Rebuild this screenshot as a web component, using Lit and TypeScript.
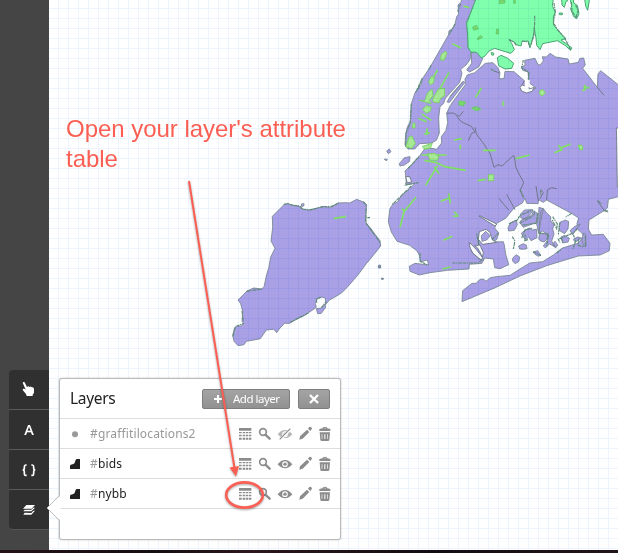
import { LitElement, html, svg, css } from "lit";
import { customElement, property } from "lit/decorators.js";

const icons: Record<string, unknown> = {
  table: svg`<path d="M12 12h37v8H12z M12 24h8v4h-8z M23 24h7v4h-7z M32 24h8v4h-8z M42 24h7v4h-7z M12 32h8v5h-8z M23 32h7v5h-7z M32 32h8v5h-8z M42 32h7v5h-7z M12 41h8v6h-8z M23 41h7v6h-7z M32 41h8v6h-8z M42 41h7v6h-7z"/>`,
  search: svg`<circle cx="24" cy="24" r="10" fill="none" stroke="currentColor" stroke-width="5"/><path d="M31 32L44 44" stroke="currentColor" stroke-width="7" stroke-linecap="round"/>`,
  eye: svg`<path fill-rule="evenodd" d="M8 31Q18 18 30 18T52 31Q42 43 30 43T8 31Z M30 22a8.500 8.500 0 1 0 0 17a8.500 8.500 0 1 0 0-17Z"/><circle cx="30" cy="30.500" r="5"/>`,
  hidden: svg`<g opacity=".62"><path fill-rule="evenodd" d="M8 31Q18 18 30 18T52 31Q42 43 30 43T8 31Z M30 22a8.500 8.500 0 1 0 0 17a8.500 8.500 0 1 0 0-17Z"/><circle cx="30" cy="30.500" r="5"/></g><path d="M15 48L48 14" stroke="#fff" stroke-width="8"/><path d="M14 46L46 14" stroke="currentColor" stroke-width="3.500"/>`,
  pencil: svg`<path d="M13 47L15 37L36 17L43 24L23 44Z M39 14L43 9Q46 7 49 10T50 16L46 21Z"/>`,
  trash: svg`<path fill-rule="evenodd" d="M13 15Q20 13 22 13Q23 8 30 8T37 13Q40 13 46 15V21H13Z M26 13H34Q34 11 30 11T26 13Z"/><path fill-rule="evenodd" d="M14 25H45L43 48Q42 51 39 51H20Q17 51 16 48Z M20 31V44H22V31Z M28 31V45H31V31Z M37 31V44H39V31Z"/>`,
};

@customElement("tool-icon")
class ToolIcon extends LitElement {
  static styles = css`
    :host { display: block; width: 20px; height: 20px; color: #8c8c8c; }
    .icon { display: block; width: 20px; height: 20px; fill: currentColor; }
  `;
  @property() name = "table";
  render() {
    return html`<svg class="icon" viewBox="0 0 60 60">${icons[this.name]}</svg>`;
  }
}

@customElement("layer-row")
class LayerRow extends LitElement {
  static styles = css`
    :host { display: block; }
    .row { display: flex; align-items: center; height: 29px; border-bottom: 1px solid #ddd; padding: 0 5px 0 10px; color: #222;
      font: 12px/29px "Noto Sans", sans-serif; letter-spacing: .14px; }
    .shape { width: 10px; height: 10px; margin-right: 10px; flex: none; }
    .name { flex: 1; }
    .hash, .dim { color: #999; }
    .tools { display: flex; }
  `;
  @property() name = "";
  @property({ type: Boolean }) off = false;
  render() {
    return html`<div class="row">
      <svg class="shape" viewBox="0 0 30 30">
        ${this.off
          ? svg`<circle cx="15" cy="16" r="9" fill="#999"/>`
          : svg`<path d="M0 31V20Q0 17 8 16Q14 15 15 9Q16 1 20 0H30V31Z" fill="#222"/>`}
      </svg>
      <span class="name ${this.off ? "dim" : ""}"><span class="hash">#</span>${this.name}</span>
      <span class="tools">
        ${["table", "search", this.off ? "hidden" : "eye", "pencil", "trash"].map(
          (n) => html`<tool-icon name=${n}></tool-icon>`
        )}
      </span>
    </div>`;
  }
}

@customElement("city-map")
class CityMap extends LitElement {
  static styles = css`
    :host { display: block; mix-blend-mode: multiply; }
    .map { display: block; width: 569px; height: 550px; }
    .land { fill: #aaa0e6; stroke: #75868f; stroke-width: 2.500; stroke-linejoin: round; }
    .north { fill: #80ffac; stroke: #4aa473; stroke-width: 3; }
    .rough { fill: none; stroke: #5f8c78; stroke-width: 3.500; stroke-dasharray: 9 2 4 3 12 2; }
    .creek { fill: none; stroke: #70788c; stroke-width: 3; stroke-linejoin: round; }
    .water { fill: #fff; stroke: #65727b; stroke-width: 2.500; }
    .line { fill: none; stroke: #81e462; stroke-width: 5; stroke-linejoin: round; }
    .patch { fill: #a7e994; stroke: #73d45a; stroke-width: 2.500; }
    .inner { fill: #7ed76f; stroke: #58c55f; stroke-width: 2; }
  `;
  render() {
    return html`<svg class="map" viewBox="147 0 1707 1650">
      <g transform="translate(1110 0)">
        <path class="land" d="M275 -4L273 7 264 15 266 42 260 50 255 72 250 84 237 93 236 104 180 202 157 236 154 252 135 278 124 311 122 363 112 381 107 403 105 435 114 447 134 447 149 431 185 429 199 421 208 399 206 354 210 320 221 310 226 295 269 247 276 220 272 208 288 195 300 179 303 155 294 142 293 104 289 66 299 45 318 0Z"/>
        <path class="rough" d="M272 12L263 35 M255 72L237 104 M183 196L176 210 M157 235L136 280 M124 311L120 372 108 400 107 440"/>
        <path class="rough" d="M153 243L145 267"/>
        <path class="land" d="M304 157L320 157 338 176 327 200 299 216 290 210 305 190Z M231 306L243 285 280 243 284 248 239 307Z M242 289L278 246"/>
        <path class="north" d="M318 -4L300 44 290 70 293 105 294 142 303 156 320 157 333 173 343 170 357 153 374 145 399 153 423 160 433 149 425 130 417 118 433 126 438 134 453 138 456 124 474 123 480 143 490 107 493 85 498 115 500 136 510 149 518 131 562 122 585 136 602 151 605 143 573 120 588 116 572 100 560 86 551 76 550 51 556 36 547 17 550 -4Z"/>
        <path class="rough" d="M494 47V68L492 104 484 133 M417 119L433 127 438 136 M456 123L475 126 480 142 M552 9L556 37 550 68 563 89 585 116 602 149"/>
        <path class="north" d="M382 173L393 166 412 174 431 190 425 205 405 207 386 197Z M364 157L372 160 370 166 364 164Z M575 -3L576 15 583 22 588 4 593 3 588 -3Z M600 -3L605 16 602 27 611 50 620 56 627 41 622 16 611 9 610 -3Z M644 -3L647 18 653 31 658 2 655 -3Z M568 39H577V44H568Z"/>
        <path class="rough" d="M604 6L606 32 618 53 624 32 617 16"/>
        <path class="land" d="M200 448L215 429 214 410 228 391 233 367 230 340 240 318 248 306 286 254 285 238 292 225 314 218 346 190 369 188 384 203 390 219 387 236 402 236 405 214 432 215 463 242 474 260 478 272 498 264 477 248 474 216 458 211 455 199 465 197 464 181 495 175 504 194 510 195 520 183 517 170 529 171 540 160 557 171 594 177 598 192 625 187 630 175 641 174 646 195 638 205 682 262 684 222 692 212 756 263 756 582 744 590 715 598 712 624 704 631 657 660 655 687 665 705 700 703 720 730 718 752 708 757 690 765 625 768 530 797 450 828 376 863 276 905 278 872 306 850 318 850 330 838 342 838 348 844 361 833 379 830 420 826 450 807 479 789 518 785 550 765 577 744 623 730 641 710 636 700 622 687 621 670 626 654 604 640 530 600 519 607 506 599 504 611 470 610 465 595 457 609 433 623 407 655 380 670 374 684 386 699 380 719 365 726 400 725 403 735 407 762 416 794 390 806 374 803 370 777 344 774 336 790 298 793 297 807 233 811 180 818 148 825 120 814 118 799 135 790 176 795 172 780 151 786 148 765 140 752 119 736 81 724 64 696 55 665 60 625 70 611 83 606 93 588 119 566 135 550 110 554 107 525 105 513 124 495 150 466 167 442Z"/>
        <path class="rough" d="M115 505L147 470 M145 548L106 555 112 530 M124 558L67 613 M150 760L151 784 172 795 M247 789H325L340 777 M301 730L307 757 330 778 M325 720L328 745 320 700 M346 690L362 709 M386 699L365 720 M460 180L455 204 477 216 472 267"/>
        <path class="creek" d="M229 340L249 339 268 349 280 334 M260 349L275 366 304 379 315 396 305 400 295 422 M315 382L319 402 338 427 360 460 372 502 384 494 396 498 431 466 435 480 437 500 445 518 461 547 456 560 450 570 460 593 M387 596L416 630 M410 583L435 629 M498 558L505 603 M513 570L520 578 510 596 M530 600L532 570 545 563 560 566 M682 602L703 632 714 636 M682 262L702 286 M374 213L388 219 M463 242L452 263 457 272"/>
        <path class="rough" d="M363 208L378 216 M450 569L461 592 M512 569V584 M701 632H714 M682 602L696 612"/>
        <path class="water" d="M450 262L457 255 470 260 474 248 478 267 493 262 486 274 470 279 455 273Z M327 648L332 648 380 672 375 678Z M297 728L303 732 320 750 338 773 333 780 309 760 301 745Z M314 737L330 735 340 758 337 772 330 756 322 743Z M107 530L119 530 125 545 112 549Z"/>
        <path fill="#fff" d="M464 262H479V240L465 238Z"/>
        <path class="water" d="M328 695L348 688 360 697 367 720 380 727 338 733 325 718Z"/>
        <path class="land" d="M334 707L347 694 361 707 350 720 336 724Z M50 453L58 447 63 455 55 461Z M43 477L52 478 49 483Z M88 491L103 473 120 470 119 484 103 495 90 498Z M25 797H32V804H25Z M35 835H40V838H35Z M-6 680L2 685 31 735 16 753 -12 789"/>

        <path class="land" d="M414 684L421 669 439 660 442 674 433 691 416 693Z M452 642L463 630 487 629 488 634 475 649 464 657 452 653Z M449 667L454 660 485 646 491 632 504 641 499 667 481 674 460 682Z M454 700L464 691 479 684 486 690 500 688 501 713 483 722 476 711 466 720Z M446 738L459 731 469 735 471 746 460 748 449 747Z M428 775L438 764 449 771 447 784 436 791 428 784Z M506 716L510 698 531 703 534 714 522 726 510 722Z M512 635L520 626 530 639 542 650 542 662 553 675 548 686 552 702 545 723 556 740 538 732 526 744 520 738 531 722 533 704 517 693 507 700 509 664Z M567 679L571 666 587 660 596 665 594 686 584 701 569 692Z M573 711L584 706 598 715 594 726 578 729Z M600 692L613 680 631 672 622 684 608 704Z M550 730L555 724 563 735 558 743 550 739Z M489 756L503 752 512 765 505 769 495 763Z M610 719L622 711 635 714 616 726Z M507 622L520 626 512 664 506 700 500 672 506 650Z M640 700L647 703 648 738 641 740 636 720Z"/>
        <path class="rough" d="M417 671L442 660 450 646 488 630 M449 670L492 646 494 637 M455 714L465 690 489 684 M466 703L464 722 474 719 M458 675L500 670 503 638 M506 700L536 702 530 740 M548 650L562 672 560 686 547 660 M570 667L565 703 M574 714L580 730 M625 716V736L639 741 M646 707L646 740 M610 704L617 722 609 747 M605 640L587 651 M622 687L609 699 565 718 570 728 M560 759L575 747 M427 710L435 723 430 747 M490 755L513 767"/>

        <path class="inner" d="M308 81L320 76 325 87 311 91Z M321 117L332 106 338 112 324 119Z M380 87H385V102H378Z M388 0H405V9L388 11Z M431 -2H436V10H431Z"/>
        <path class="line" d="M280 18L297 23 M247 131L273 144 M203 210L181 247 M237 217L210 266 M334 264L317 292 M268 304L274 317 M277 304L287 311 M305 325L332 329 M155 342L184 361 M145 355L170 365 M171 385V405 M162 402L179 398 M252 420L276 416 M271 434V448 M155 465H230 M163 481L200 488 225 500 287 511 M203 497L167 556 M193 500L207 521 M138 592L102 635 90 682 M102 632L96 626 M236 580L241 610 M212 604L236 595 M253 635L264 648 250 649 M220 721L247 709 M217 807L242 801 M323 542L347 538 M339 451H377 M437 476L479 465 M553 458L576 449 565 435 M570 445L602 432 M624 436L637 449 M400 304V318 M645 254V269L637 272 M640 263H658"/>
        <path class="patch" d="M210 180L214 163 226 154 231 158 223 180Z M176 246L183 230 193 231 191 248 181 255Z M164 302L173 278 186 267 189 287 178 302 184 311 148 301Z M187 299L205 267 224 265 224 287 213 294 206 309 191 306Z M158 328L168 317 184 321 181 334 168 340Z M129 369H135V384H127Z M116 412L126 408 136 431 125 445 108 441Z M157 439L187 430 181 445 164 448Z M355 524H371V542H355Z M171 462L194 460 207 470 202 481 180 480Z M626 435L636 436 639 449 629 449Z M508 273L518 269 526 278 517 288 509 283Z"/>
        <path class="inner" d="M267 306L272 301 278 307 287 306 280 318 266 314Z M307 323L321 320 332 327 317 333Z"/>
        <path class="water" d="M756 384H739L740 421 742 561H756Z"/>
      </g>
      <g transform="translate(660 540)">
        <path class="land" d="M191 75L203 70 216 76 238 78 244 87 269 91 309 79 331 83 354 69 378 68 389 69 410 58 433 67 440 74 436 125 480 182 482 198 464 221 439 251 413 286 386 317 367 337 350 348 327 361 317 374 316 354 306 351 292 356 286 371 289 382 266 398 253 407 237 414 222 422 209 430 194 430 180 444 170 458 161 448 139 450 121 476 107 479 79 484 72 494 54 497 42 484 38 466 43 446 50 438 62 438 72 430 66 425 68 394 62 371 54 360 81 333 101 324 125 327 132 320 140 283 146 265 152 231 165 205 153 183 158 142 157 109Z"/>
        <path class="land" d="M289 386L305 384 315 372 317 382 304 400 293 401Z M244 72L252 71 252 77 245 80Z M477 255H481V262H477Z M485 295H489V297H485Z"/>
        <path class="rough" d="M191 73L203 71 217 75 240 79 249 88 273 89 309 80 335 79 356 69 M430 65L440 80 M438 86V126 M442 113H450M438 130L480 187 M290 368L289 357 302 352 M304 383L318 365 M50 438L71 430 M66 393L70 425 M80 334L127 327 M210 427L265 399 M46 440L39 469"/>
        <path class="line" d="M341 116L378 109"/>
      </g>
    </svg>`;
  }
}

@customElement("app-root")
class AppRoot extends LitElement {
  static styles = css`
    :host { display: flex; flex-direction: column; width: 618px; height: 553px; overflow: hidden; background: #fff; }
    .main { display: flex; height: 550px; }
    .strip { height: 3px; background: linear-gradient(90deg, #241118, #140d12 25%, #2b171c 40%, #120c12 70%, #21141a); }
    .side { width: 49px; background: #454545; display: flex; flex-direction: column; align-items: flex-end; justify-content: flex-end; }
    .tools { width: 40px; margin-bottom: 20px; background: #303030; border-radius: 4px 0 0 4px; border-bottom: 1px solid #555; }
    .tool { height: 39px; border-bottom: 1px solid #5a5a5a; color: #fff; display: flex; align-items: center; justify-content: center; }
    .tool:last-child { border: 0; }
    .glyph { width: 40px; height: 40px; fill: #fff; flex: none; }
    .letter { font: 600 14.500px/39px "Open Sans", sans-serif; }
    .canvas { position: relative; width: 569px; height: 550px; background:
      linear-gradient(90deg, #edf4fd 1px, transparent 1px) 9px 0 / 10px 10px,
      linear-gradient(#edf4fd 1px, transparent 1px) 0 8px / 10px 10px, #fff; }
    .panel { position: absolute; left: 10px; top: 378px; width: 280px; height: 160px; background: #fff; border: 1px solid #bbb;
      border-radius: 3px; box-shadow: 0 0 2px rgba(0,0,0,.25); }
    .head { height: 39px; display: flex; align-items: center; padding: 0 10px; border-bottom: 1px solid #ddd; }
    .title { flex: 1; font: 15.500px/36px "Noto Sans", sans-serif; color: #222; letter-spacing: -.3px; padding-bottom: 2px; }
    .btn { box-sizing: border-box; height: 20px; border: 1px solid #7d7d7d; border-radius: 2px; background: linear-gradient(#a4a4a4, #919191);
      color: #fff; font: 11.500px/18px "Noto Sans", sans-serif; display: flex; align-items: center; white-space: nowrap; }
    .add { width: 88px; padding-left: 11px; gap: 11px; margin-right: 8px; letter-spacing: -.5px; }
    .close { width: 32px; justify-content: center; }
    .mark { width: 8px; height: 8px; stroke: #fff; flex: none; }
    .close .mark { width: 10px; height: 10px; }
    .caret { position: absolute; left: -15px; top: 115px; width: 16px; height: 28px; }
    .note { position: absolute; left: 17px; top: 114px; width: 300px; font: 24px/30px "Liberation Sans", sans-serif; letter-spacing: -.03px; color: #fb5f53; }
    .overlay { position: absolute; left: 0; top: 0; width: 569px; height: 550px; }
    .pointer { filter: drop-shadow(0 1px 1px rgba(0,0,0,.35)); }
  `;
  render() {
    return html`
      <div class="main">
        <div class="side">
          <div class="tools">
            <div class="tool"><svg class="glyph" viewBox="0 0 120 120"><path d="M41 38Q43 34 47 37L54 51Q58 47 61 51Q65 48 68 52Q75 51 75 57V68L71 74V78H53L51 72L41 60Q41 55 47 57L50 59Z"/></svg></div>
            <div class="tool"><span class="letter">A</span></div>
            <div class="tool"><svg class="glyph" viewBox="0 0 120 120"><path d="M53 45H50Q46 45 46 50V55Q46 60 41 60Q46 60 46 65V71Q46 76 50 76H53 M67 45H70Q74 45 74 50V55Q74 60 79 60Q74 60 74 65V71Q74 76 70 76H67" fill="none" stroke="#fff" stroke-width="5"/></svg></div>
            <div class="tool"><svg class="glyph" viewBox="0 0 120 120"><path d="M52 45H78L68 56H42Z M47 59L43 64H67L78 53L73 53L67 59Z M47 68L43 74H67L78 62L73 62L67 69Z"/></svg></div>
          </div>
        </div>
        <div class="canvas">
          <city-map></city-map>
          <div class="panel">
            <svg class="caret" viewBox="0 0 16 28"><path d="M16 1L2 14L16 27Z" fill="#fff"/><path d="M15 1L2 14L15 27" fill="none" stroke="#bbb"/></svg>
            <div class="head">
              <span class="title">Layers</span>
              <span class="btn add"><svg class="mark" viewBox="0 0 8 8"><path d="M4 0V8M0 4H8" stroke-width="2"/></svg><span>Add layer</span></span>
              <span class="btn close"><svg class="mark" viewBox="0 0 10 10"><path d="M1 1L9 9M9 1L1 9" stroke-width="2.300"/></svg></span>
            </div>
            <layer-row name="graffitilocations2" off></layer-row>
            <layer-row name="bids"></layer-row>
            <layer-row name="nybb"></layer-row>
          </div>
          <div class="note">Open your layer's attribute table</div>
          <svg class="overlay" viewBox="49 0 569 550">
            <g class="pointer">
              <path d="M189 181L234.500 468" stroke="#fb5f53" stroke-width="2"/>
              <path d="M229.500 467.500L239 466L236 476.500Z" fill="#fb5f53"/>
              <ellipse cx="244.500" cy="495" rx="18.300" ry="12.600" fill="none" stroke="#fb5f53" stroke-width="2.600"/>
            </g>
          </svg>
        </div>
      </div>
      <div class="strip"></div>
    `;
  }
}
